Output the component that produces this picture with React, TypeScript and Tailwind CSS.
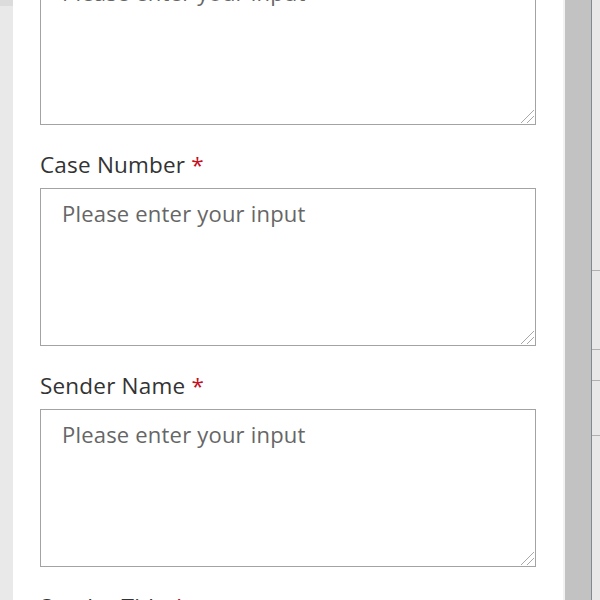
import React from "react";

function Field({ label, showLabel = true }: { label?: string; showLabel?: boolean }) {
  return (
    <div className="flex flex-col">
      {showLabel && (
        <div className="mt-[25px] mb-[8px] h-[30px] text-[22.5px] leading-[30px] tracking-[0.2px] text-[#333333] whitespace-nowrap">
          {label} <span className="text-[#c50f1f]">*</span>
        </div>
      )}
      <div className="relative h-[158px] w-[496px]">
        <textarea
          className="block h-[158px] w-[496px] resize-none border border-[#a3a3a3] bg-white pl-[21px] pt-[9px] text-[22px] leading-[30px] tracking-[0.2px] text-[#333] placeholder:text-[#666666] outline-none"
          placeholder="Please enter your input"
          style={{ fontFamily: '"Open Sans", "Noto Sans", sans-serif' }}
        />
        <svg
          className="pointer-events-none absolute bottom-[1px] right-[1px]"
          width="15"
          height="15"
          viewBox="0 0 15 15"
        >
          <line x1="1" y1="14" x2="14" y2="1" stroke="#a8a8a8" strokeWidth="1" />
          <line x1="7" y1="14" x2="14" y2="7" stroke="#a8a8a8" strokeWidth="1" />
        </svg>
      </div>
    </div>
  );
}

export default function App() {
  return (
    <div
      className="flex h-[600px] w-[600px] overflow-hidden bg-white"
      style={{ fontFamily: '"Open Sans", "Noto Sans", sans-serif' }}
    >
      <div className="flex w-[13px] flex-col bg-[#e9e9e9]">
        <div className="h-[6px] bg-[#dcdcdc]" />
      </div>
      <div className="flex w-[550px] flex-col overflow-hidden bg-white pl-[27px]">
        <div className="-mt-[33px] flex flex-col">
          <Field showLabel={false} />
          <Field label="Case Number" />
          <Field label="Sender Name" />
          <Field label="Sender Title" />
        </div>
      </div>
      <div className="w-[2px] bg-[#f2f2f2]" />
      <div className="w-[26px] bg-[#c2c2c2]" />
      <div className="w-[1px] bg-[#7d8b91]" />
      <div className="flex w-[8px] flex-col bg-[#e8e8e8]">
        <div className="h-[270px]" />
        <div className="h-[1px] bg-[#b0b0b0]" />
        <div className="h-[78px]" />
        <div className="h-[1px] bg-[#b0b0b0]" />
        <div className="h-[30px]" />
        <div className="h-[1px] bg-[#b0b0b0]" />
        <div className="h-[54px]" />
        <div className="h-[1px] bg-[#b0b0b0]" />
      </div>
    </div>
  );
}
